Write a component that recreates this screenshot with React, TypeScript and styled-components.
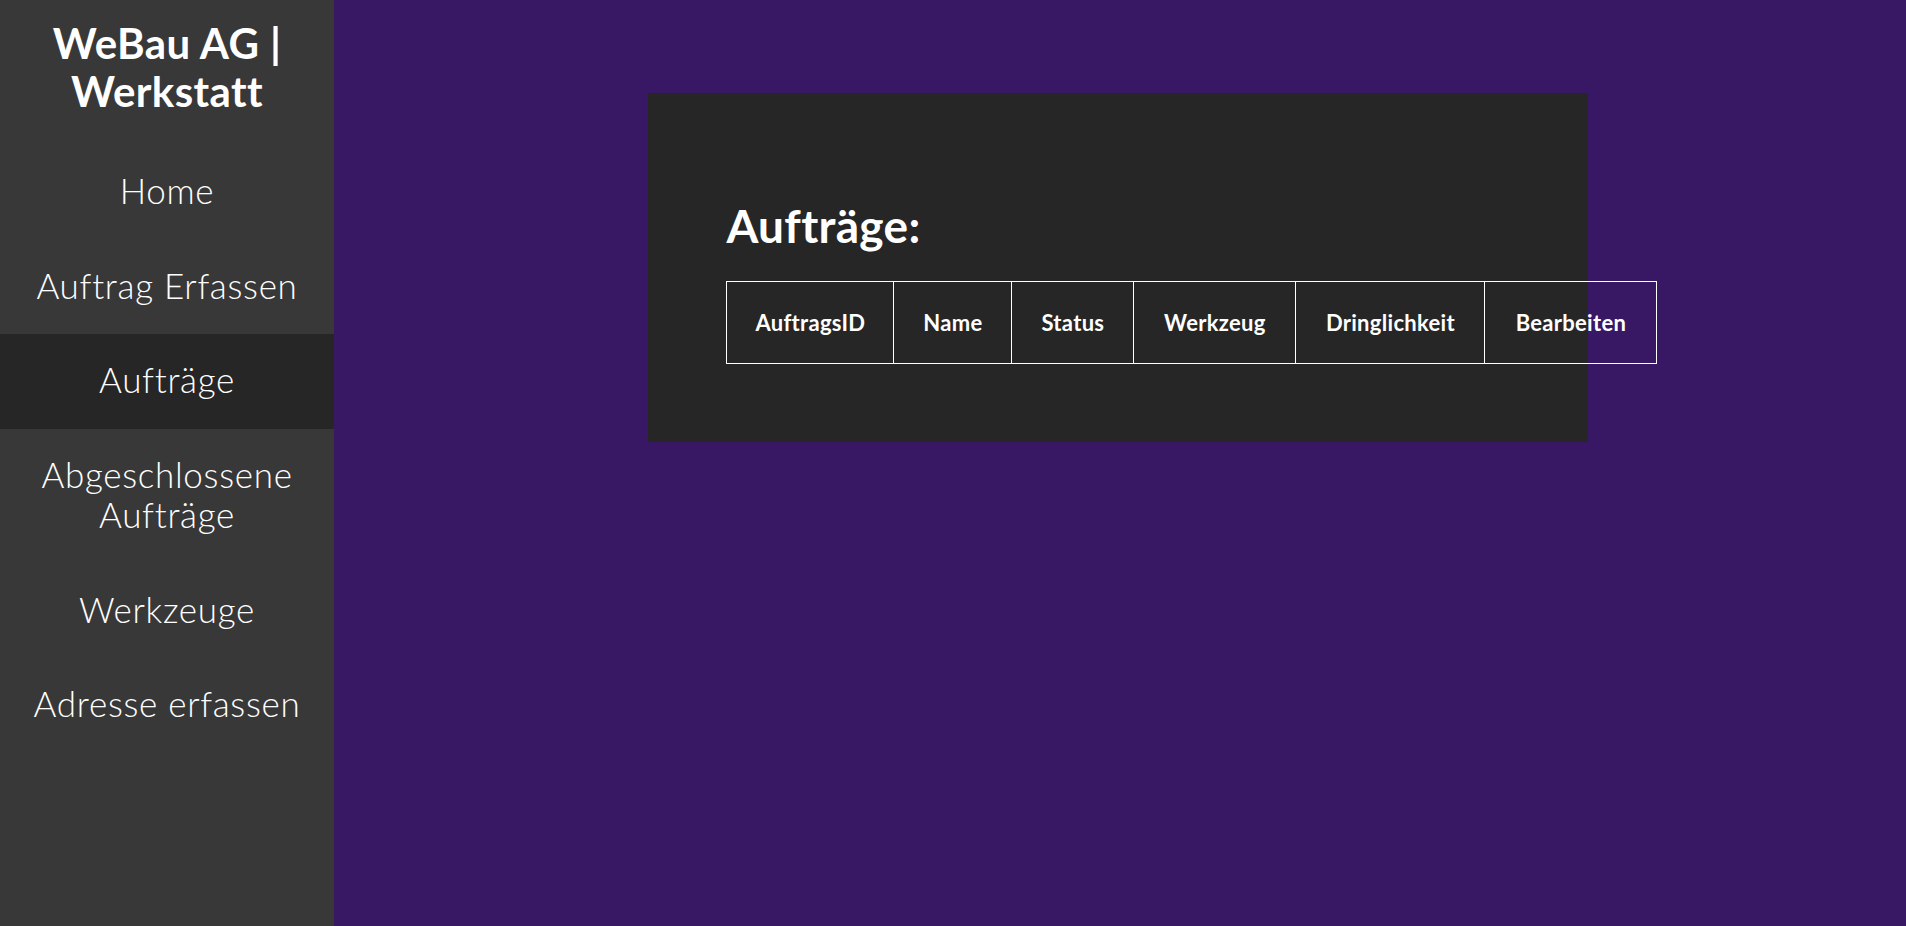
import React from "react";
import styled, { createGlobalStyle } from "styled-components";

const Global = createGlobalStyle`
  html, body { margin: 0; padding: 0; height: 100%; }
  body {
    font-family: Lato, "Open Sans", "Liberation Sans", sans-serif;
    background: #381764;
    color: #ffffff;
  }
  #root { height: 100%; }
`;

const Layout = styled.div`
  display: flex;
  min-height: 926px;
  height: 100vh;
`;

const Sidebar = styled.nav`
  width: 334px;
  flex: 0 0 334px;
  background: #383838;
  display: flex;
  flex-direction: column;
`;

const Brand = styled.h1`
  margin: 0;
  padding: 19px 10px 30px;
  font-size: 42px;
  line-height: 48px;
  font-weight: 700;
  text-align: center;
  letter-spacing: 0.4px;
`;

const NavItem = styled.a<{ $active?: boolean }>`
  display: block;
  padding: 25px 10px 29px;
  font-size: 35px;
  line-height: 40.5px;
  font-weight: 300;
  text-align: center;
  color: #ffffff;
  text-decoration: none;
  letter-spacing: 0.7px;
  background: ${(p) => (p.$active ? "#262626" : "transparent")};
`;

const Main = styled.main`
  flex: 1;
  background: #381764;
  padding-top: 93px;
`;

const Card = styled.section`
  width: 59.8%;
  margin: 0 0 0 20%;
  box-sizing: border-box;
  padding: 78px;
  background: #262626;
`;

const Title = styled.h2`
  margin: 30px 0 30px;
  font-size: 46px;
  line-height: 50px;
  font-weight: 700;
  letter-spacing: 0.3px;
`;

const Table = styled.table`
  border-collapse: collapse;
  table-layout: fixed;
  width: 930px;
`;

const HeadCell = styled.th<{ $w: number }>`
  width: ${(p) => p.$w}px;
  height: 82px;
  box-sizing: border-box;
  border: 1px solid #ffffff;
  padding: 0;
  font-size: 22px;
  font-weight: 700;
  text-align: center;
  letter-spacing: 0.3px;
`;

const columns: [string, number][] = [
  ["AuftragsID", 167],
  ["Name", 118],
  ["Status", 122],
  ["Werkzeug", 162],
  ["Dringlichkeit", 189],
  ["Bearbeiten", 172],
];

const navItems = [
  "Home",
  "Auftrag Erfassen",
  "Aufträge",
  "Abgeschlossene Aufträge",
  "Werkzeuge",
  "Adresse erfassen",
];

export default function App() {
  return (
    <>
      <Global />
      <Layout>
        <Sidebar>
          <Brand>
            WeBau AG |<br />
            Werkstatt
          </Brand>
          {navItems.map((n) => (
            <NavItem key={n} href="#" $active={n === "Aufträge"}>
              {n}
            </NavItem>
          ))}
        </Sidebar>
        <Main>
          <Card>
            <Title>Aufträge:</Title>
            <Table>
              <thead>
                <tr>
                  {columns.map(([c, w]) => (
                    <HeadCell key={c} $w={w}>
                      {c}
                    </HeadCell>
                  ))}
                </tr>
              </thead>
            </Table>
          </Card>
        </Main>
      </Layout>
    </>
  );
}
